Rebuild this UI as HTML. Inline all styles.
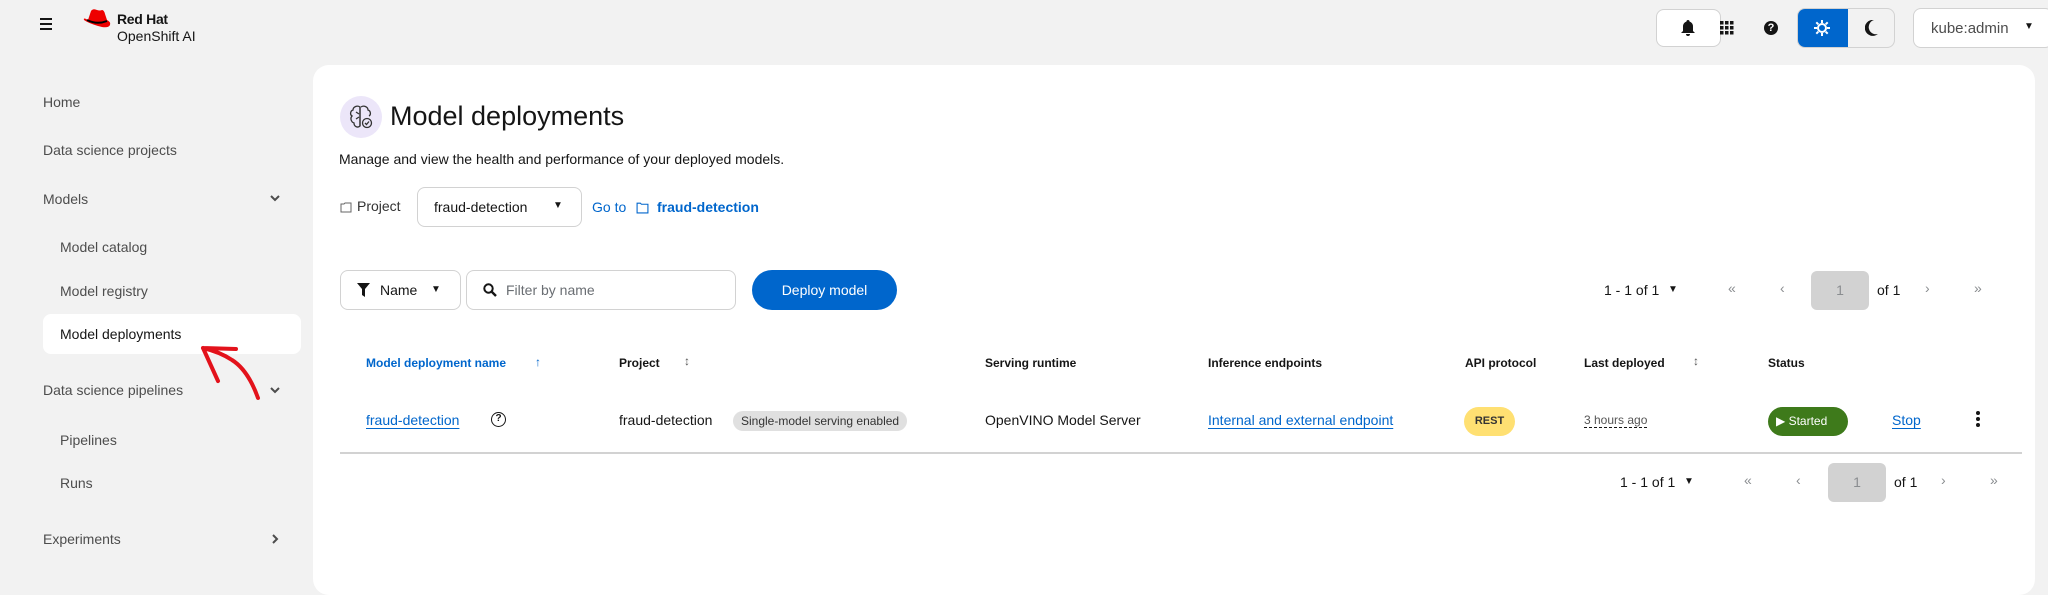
<!DOCTYPE html>
<html><head><meta charset="utf-8"><style>
*{box-sizing:border-box;margin:0;padding:0}
body{width:2048px;height:581px;overflow:hidden;background:#f2f2f2;font-family:"Liberation Sans",sans-serif;color:#151515;position:relative;font-size:14px}
.a{position:absolute;white-space:nowrap}
.nav{color:#4d4d4d;font-size:14px}
.btn{position:absolute;border:1px solid #d2d2d2;border-radius:8px;background:#fff}
.th{font-size:12px;font-weight:bold;color:#151515}
.link{color:#0066cc;text-decoration:underline;text-underline-offset:3px}
.pg{color:#8a8d90;font-size:14px}
</style></head><body>
<!-- header -->
<div class="a" style="left:40px;top:18px;width:12px">
 <div style="height:2px;background:#151515;margin-bottom:3px"></div><div style="height:2px;background:#151515;margin-bottom:3px"></div><div style="height:2px;background:#151515"></div></div>
<svg class="a" style="left:82px;top:8px" width="30" height="24" viewBox="0 0 30 24"><path d="M6 12 L9 3 Q11 0 15 2 Q18 3 20 2 Q22 2 23 6 L25 12 Q29 14 28 17 Q26 21 16 18 Q6 15 2 12 Q1 9 6 12Z" fill="#e00"/><path d="M5 12 Q15 17 25 13" stroke="#000" stroke-width="2" fill="none"/></svg>
<div class="a" style="left:117px;top:11px;font-weight:bold;font-size:14px;letter-spacing:-.3px">Red Hat</div>
<div class="a" style="left:117px;top:28px;font-size:14px">OpenShift AI</div>

<div class="btn" style="left:1656px;top:9px;width:65px;height:38px"></div>
<svg class="a" style="left:1681px;top:20px" width="14" height="16" viewBox="0 0 14 16"><path d="M7 0a1.5 1.5 0 0 1 1.5 1.5 5 5 0 0 1 3.5 5V11l2 2H0l2-2V6.5a5 5 0 0 1 3.5-5A1.5 1.5 0 0 1 7 0zM5 14h4a2 2 0 0 1-4 0z" fill="#151515"/></svg>
<svg class="a" style="left:1720px;top:21px" width="14" height="14" viewBox="0 0 14 14" fill="#151515"><rect x="0" y="0" width="3.5" height="3.5"/><rect x="5" y="0" width="3.5" height="3.5"/><rect x="10" y="0" width="3.5" height="3.5"/><rect x="0" y="5" width="3.5" height="3.5"/><rect x="5" y="5" width="3.5" height="3.5"/><rect x="10" y="5" width="3.5" height="3.5"/><rect x="0" y="10" width="3.5" height="3.5"/><rect x="5" y="10" width="3.5" height="3.5"/><rect x="10" y="10" width="3.5" height="3.5"/></svg>
<div class="a" style="left:1764px;top:21px;width:14px;height:14px;border-radius:50%;background:#151515;color:#fff;font-size:11px;font-weight:bold;text-align:center;line-height:14px">?</div>
<div class="a" style="left:1797px;top:8px;width:98px;height:40px;border:1px solid #d2d2d2;border-radius:8px;background:#f2f2f2;overflow:hidden"><div style="width:50px;height:40px;background:#0066cc"></div></div>
<svg class="a" style="left:1814px;top:20px" width="16" height="16" viewBox="0 0 16 16"><circle cx="8" cy="8" r="4" fill="none" stroke="#fff" stroke-width="2"/><g stroke="#fff" stroke-width="2"><path d="M8 0v3M8 13v3M0 8h3M13 8h3M2.3 2.3l2 2M11.7 11.7l2 2M2.3 13.7l2-2M11.7 4.3l2-2"/></g></svg>
<svg class="a" style="left:1865px;top:20px" width="14" height="16" viewBox="0 0 14 16"><path d="M9 0A8 8 0 1 0 13 14 7 7 0 0 1 9 0z" fill="#151515"/></svg>
<div class="btn" style="left:1913px;top:8px;width:140px;height:40px"></div>
<div class="a" style="left:1931px;top:20px;color:#4d4d4d;font-size:15px">kube:admin</div>
<div class="a" style="left:2024px;top:21px;font-size:10px">▼</div>

<!-- sidebar -->
<div class="a nav" style="left:43px;top:94px">Home</div>
<div class="a nav" style="left:43px;top:142px">Data science projects</div>
<div class="a nav" style="left:43px;top:191px">Models</div>
<svg class="a" style="left:270px;top:195px" width="10" height="7" viewBox="0 0 10 7"><path d="M1 1l4 4 4-4" stroke="#4d4d4d" stroke-width="2" fill="none"/></svg>
<div class="a nav" style="left:60px;top:239px">Model catalog</div>
<div class="a nav" style="left:60px;top:283px">Model registry</div>
<div class="a" style="left:43px;top:314px;width:258px;height:40px;background:#fff;border-radius:8px"></div>
<div class="a" style="left:60px;top:326px;color:#151515">Model deployments</div>
<div class="a nav" style="left:43px;top:382px">Data science pipelines</div>
<svg class="a" style="left:270px;top:387px" width="10" height="7" viewBox="0 0 10 7"><path d="M1 1l4 4 4-4" stroke="#4d4d4d" stroke-width="2" fill="none"/></svg>
<div class="a nav" style="left:60px;top:432px">Pipelines</div>
<div class="a nav" style="left:60px;top:475px">Runs</div>
<div class="a nav" style="left:43px;top:531px">Experiments</div>
<svg class="a" style="left:272px;top:534px" width="7" height="10" viewBox="0 0 7 10"><path d="M1 1l4 4-4 4" stroke="#4d4d4d" stroke-width="2" fill="none"/></svg>

<!-- panel -->
<div class="a" style="left:313px;top:65px;width:1722px;height:530px;background:#fff;border-radius:16px"></div>
<div class="a" style="left:340px;top:96px;width:42px;height:42px;border-radius:50%;background:#ece6f9"></div>
<svg class="a" style="left:348px;top:104px" width="26" height="26" viewBox="0 0 26 26" fill="none" stroke="#333" stroke-width="1.3"><path d="M12 3C9 1 5 3 5 6 2 7 2 11 4 12 2 14 3 18 6 19 6 23 10 24 12 22ZM13 3C16 1 20 3 20 6 23 7 23 11 21 12"/><path d="M12 3v19M8 8l3 2M8 15l3-2"/><circle cx="19" cy="19" r="4.5"/><path d="M17 19l1.5 1.5 2.5-3"/></svg>
<div class="a" style="left:390px;top:101px;font-size:27px">Model deployments</div>
<div class="a" style="left:339px;top:151px;font-size:14px">Manage and view the health and performance of your deployed models.</div>

<svg class="a" style="left:340px;top:201px" width="12" height="12" viewBox="0 0 12 12" fill="none" stroke="#666"><path d="M1 3h3l1-1h6v9H1z"/></svg>
<div class="a" style="left:357px;top:198px;font-size:14px;color:#333">Project</div>
<div class="btn" style="left:417px;top:187px;width:165px;height:40px"></div>
<div class="a" style="left:434px;top:199px">fraud-detection</div>
<div class="a" style="left:553px;top:200px;font-size:10px">▼</div>
<div class="a" style="left:592px;top:199px;color:#0066cc">Go to</div>
<svg class="a" style="left:636px;top:201px" width="13" height="13" viewBox="0 0 12 12" fill="none" stroke="#0066cc"><path d="M1 2h3l1 1h6v8H1z"/></svg>
<div class="a" style="left:657px;top:199px;color:#0066cc;font-weight:bold">fraud-detection</div>

<!-- toolbar -->
<div class="btn" style="left:340px;top:270px;width:121px;height:40px"></div>
<svg class="a" style="left:357px;top:283px" width="13" height="14" viewBox="0 0 13 14"><path d="M0 0h13L8 6v8L5 12V6z" fill="#151515"/></svg>
<div class="a" style="left:380px;top:282px">Name</div>
<div class="a" style="left:431px;top:284px;font-size:10px">▼</div>
<div class="btn" style="left:466px;top:270px;width:270px;height:40px"></div>
<svg class="a" style="left:483px;top:283px" width="14" height="14" viewBox="0 0 14 14"><circle cx="5.5" cy="5.5" r="4.2" fill="none" stroke="#151515" stroke-width="2"/><path d="M8.5 8.5L13 13" stroke="#151515" stroke-width="2.4"/></svg>
<div class="a" style="left:506px;top:282px;color:#6a6e73">Filter by name</div>
<div class="a" style="left:752px;top:270px;width:145px;height:40px;border-radius:20px;background:#0066cc;color:#fff;text-align:center;line-height:40px">Deploy model</div>

<div class="a" style="left:1604px;top:282px">1 - 1 of 1</div>
<div class="a" style="left:1668px;top:284px;font-size:10px">▼</div>
<div class="a pg" style="left:1728px;top:280px">«</div>
<div class="a pg" style="left:1780px;top:280px">‹</div>
<div class="a" style="left:1811px;top:271px;width:58px;height:39px;background:#d2d2d2;border-radius:6px;color:#8a8d90;text-align:center;line-height:39px">1</div>
<div class="a" style="left:1877px;top:282px">of 1</div>
<div class="a pg" style="left:1925px;top:280px">›</div>
<div class="a pg" style="left:1974px;top:280px">»</div>

<!-- table -->
<div class="a th" style="left:366px;top:356px;color:#0066cc">Model deployment name</div>
<div class="a th" style="left:535px;top:355px;color:#0066cc">↑</div>
<div class="a th" style="left:619px;top:356px">Project</div>
<div class="a th" style="left:684px;top:354px;color:#555">↕</div>
<div class="a th" style="left:985px;top:356px">Serving runtime</div>
<div class="a th" style="left:1208px;top:356px">Inference endpoints</div>
<div class="a th" style="left:1465px;top:356px">API protocol</div>
<div class="a th" style="left:1584px;top:356px">Last deployed</div>
<div class="a th" style="left:1693px;top:354px;color:#555">↕</div>
<div class="a th" style="left:1768px;top:356px">Status</div>

<div class="a link" style="left:366px;top:412px">fraud-detection</div>
<div class="a" style="left:491px;top:412px;width:15px;height:15px;border:1.5px solid #151515;border-radius:50%;font-size:10px;font-weight:bold;text-align:center;line-height:12px">?</div>
<div class="a" style="left:619px;top:412px">fraud-detection</div>
<div class="a" style="left:733px;top:411px;height:20px;padding:0 8px;background:#e0e0e0;border-radius:10px;font-size:12px;line-height:20px;color:#333">Single-model serving enabled</div>
<div class="a" style="left:985px;top:412px">OpenVINO Model Server</div>
<div class="a link" style="left:1208px;top:412px">Internal and external endpoint</div>
<div class="a" style="left:1464px;top:407px;width:51px;height:29px;background:#ffe072;border-radius:15px;font-size:11px;font-weight:bold;text-align:center;line-height:29px;color:#333">REST</div>
<div class="a" style="left:1584px;top:413px;font-size:12px;color:#555;border-bottom:1px dashed #151515">3 hours ago</div>
<div class="a" style="left:1768px;top:407px;width:80px;height:29px;background:#3e7a1b;border-radius:15px;color:#fff;font-size:12px;line-height:29px;padding-left:8px">▶ Started</div>
<div class="a link" style="left:1892px;top:412px">Stop</div>
<div class="a" style="left:1976px;top:411px;width:4px">
 <div style="width:4px;height:4px;border-radius:2px;background:#151515;margin-bottom:2px"></div><div style="width:4px;height:4px;border-radius:2px;background:#151515;margin-bottom:2px"></div><div style="width:4px;height:4px;border-radius:2px;background:#151515"></div></div>
<div class="a" style="left:340px;top:452px;width:1682px;height:2px;background:#d2d2d2"></div>

<div class="a" style="left:1620px;top:474px">1 - 1 of 1</div>
<div class="a" style="left:1684px;top:476px;font-size:10px">▼</div>
<div class="a pg" style="left:1744px;top:472px">«</div>
<div class="a pg" style="left:1796px;top:472px">‹</div>
<div class="a" style="left:1828px;top:463px;width:58px;height:39px;background:#d2d2d2;border-radius:6px;color:#8a8d90;text-align:center;line-height:39px">1</div>
<div class="a" style="left:1894px;top:474px">of 1</div>
<div class="a pg" style="left:1941px;top:472px">›</div>
<div class="a pg" style="left:1990px;top:472px">»</div>

<!-- red arrow -->
<svg class="a" style="left:0;top:0" width="400" height="581"><path d="M258 398 Q248 370 232 360 Q220 352 203 348 M203 348 L236 349 M203 348 L218 381" stroke="#e3121b" stroke-width="4" fill="none" stroke-linecap="round"/></svg>
</body></html>
